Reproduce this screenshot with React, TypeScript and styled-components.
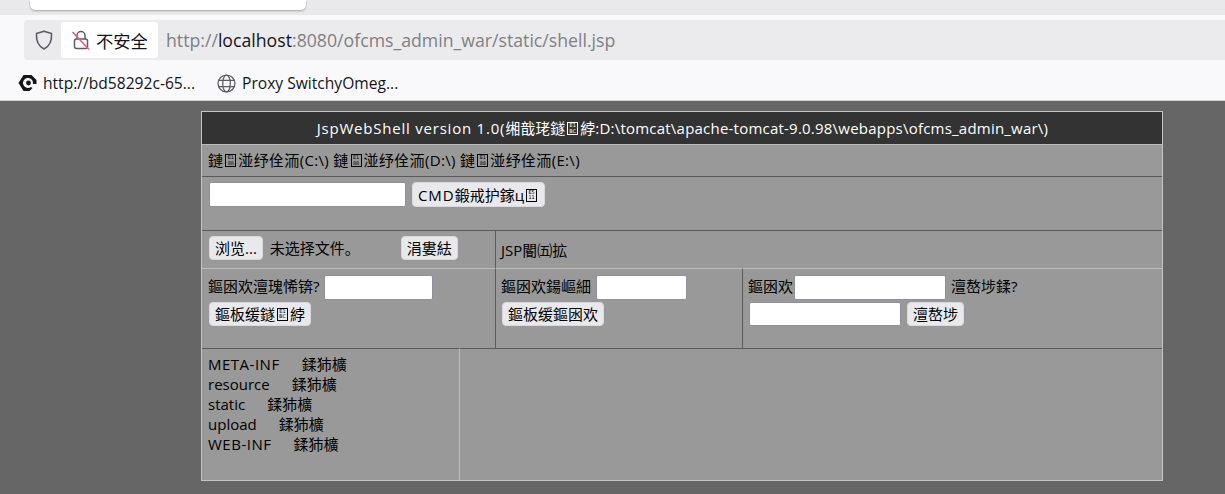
import React from "react";
import styled, { createGlobalStyle } from "styled-components";

const Global = createGlobalStyle`
  html, body { margin: 0; padding: 0; background: #666666; overflow: hidden; }
  body { font-family: "Noto Sans CJK SC", "Noto Sans", sans-serif; }
  #root { width: 1225px; height: 494px; overflow: hidden; }
`;

const TabStrip = styled.div`
  height: 15px;
  background: #e9e9eb;
  padding-left: 30px;
`;
const ActiveTab = styled.div`
  width: 276px;
  height: 10px;
  background: #fff;
  border-radius: 0 0 5px 5px;
  box-shadow: 0 1px 2px rgba(0, 0, 0, 0.3);
`;
const Toolbar = styled.div`
  height: 45px;
  background: #f9f9fb;
  padding: 5px 0 0 24px;
  box-sizing: border-box;
`;
const AddressBar = styled.div`
  height: 40px;
  background: #ebebed;
  border-radius: 4px 0 0 4px;
  display: flex;
  align-items: center;
  padding-left: 10px;
  gap: 7px;
`;
const SiteBadge = styled.div`
  height: 36px;
  width: 97px;
  background: #fff;
  border-radius: 3px;
  display: flex;
  align-items: center;
  padding-left: 10px;
  box-sizing: border-box;
  gap: 5px;
  font-size: 17.3px;
  color: #15141a;
`;
const Url = styled.div`
  font-family: "Open Sans", sans-serif;
  font-size: 17.7px;
  color: #7f7f84;
  margin-left: 1px;
  & b { font-weight: 400; color: #15141a; }
`;
const Bookmarks = styled.div`
  height: 34px;
  padding: 6px 0 0 18px;
  background: #f9f9fb;
  border-bottom: 1px solid #cfcfd8;
  display: flex;
  align-items: center;
  gap: 22px;
  font-family: "Open Sans", sans-serif;
  font-size: 15.6px;
  color: #15141a;
`;
const Bookmark = styled.div`
  display: flex;
  align-items: center;
  gap: 6px;
`;

const Page = styled.main`
  padding: 10px 0 0 201px;
`;
const Shell = styled.div`
  width: 962px;
  height: 370px;
  box-sizing: border-box;
  background: #999999;
  border: 1px solid #c4c4c4;
  display: grid;
  grid-template-columns: 257px 36px 247px 1fr;
  grid-template-rows: 32px 32px 54px 38px 80px 1fr;
  font-family: "Open Sans", "Noto Sans CJK SC", sans-serif;
  font-size: 15px;
  color: #000;
`;
const Cell = styled.div<{
  $span?: string;
  $dark?: boolean;
  $center?: boolean;
  $top?: "light" | "dark";
  $left?: "light" | "dark";
  $middle?: boolean;
  $track?: number;
}>`
  grid-column: ${(p) => p.$span ?? "auto"};
  box-sizing: border-box;
  min-width: 0;
  border-top: ${(p) =>
    p.$top ? `1px solid ${p.$top === "light" ? "#bdbdbd" : "#5a5a5a"}` : "0"};
  border-left: ${(p) =>
    p.$left ? `1px solid ${p.$left === "light" ? "#bdbdbd" : "#5a5a5a"}` : "0"};
  padding: ${(p) => (p.$dark ? 6 : 5)}px 5px 5px ${(p) => (p.$left ? 5 : 6)}px;
  background: ${(p) => (p.$dark ? "#333333" : "transparent")};
  color: ${(p) => (p.$dark ? "#ffffff" : "inherit")};
  text-align: ${(p) => (p.$center ? "center" : "left")};
  white-space: nowrap;
  line-height: 20px;
  letter-spacing: ${(p) => p.$track ?? 0}px;
  ${(p) => (p.$middle ? "display: flex; align-items: center;" : "")}
`;
const Tracked = styled.span<{ $track: number }>`
  letter-spacing: ${(p) => p.$track}px;
`;
const Field = styled.input<{ $w: number; $h?: number }>`
  width: ${(p) => p.$w}px;
  height: ${(p) => p.$h ?? 25}px;
  box-sizing: border-box;
  margin: 0 1px;
  border: 1px solid #8f8f9d;
  border-radius: 2px;
  background: #fff;
  padding: 0;
  vertical-align: middle;
`;
const Btn = styled.button<{ $h?: number }>`
  height: ${(p) => p.$h ?? 24}px;
  margin: 0 1px;
  padding: 0 5px;
  border: 1px solid #dadade;
  border-radius: 4px;
  background: #e9e9ed;
  font: inherit;
  color: #000;
  vertical-align: middle;
  line-height: 20px;
`;
const FileName = styled.span`
  margin: 0 7px 0 6px;
  vertical-align: middle;
`;
const UploadGap = styled.span`
  display: inline-block;
  width: 33px;
`;
const Row = styled.div`
  height: 26px;
  line-height: 24px;
`;
const FileLine = styled.div`
  line-height: 20px;
  display: flex;
  gap: 22px;
`;
const FileTitle = styled.span<{ $caps: boolean }>`
  letter-spacing: ${(p) => (p.$caps ? 0.5 : 0)}px;
`;
const TofuBox = styled.span`
  display: inline-block;
  width: 11px;
  height: 13px;
  box-sizing: border-box;
  margin: 0 2px;
  overflow: hidden;
  border: 1px solid currentColor;
  font-family: "DejaVu Sans", sans-serif;
  font-size: 5px;
  line-height: 5.5px;
  letter-spacing: 0;
  text-align: center;
  vertical-align: -1px;
`;
const TofuLine = styled.span`
  display: block;
`;

const Tofu = ({ hex }: { hex: [string, string] }) => (
  <TofuBox>
    <TofuLine>{hex[0]}</TofuLine>
    <TofuLine>{hex[1]}</TofuLine>
  </TofuBox>
);

const Shield = () => (
  <svg width="20" height="22" viewBox="0 0 20 22" fill="none" stroke="#5b5b66" strokeWidth="1.6">
    <path d="M10 2.2 L17.5 4.6 C18 12 15.5 17.2 10 20 C4.5 17.2 2 12 2.5 4.6 Z" strokeLinejoin="round" />
  </svg>
);
const BrokenLock = () => (
  <svg width="20" height="22" viewBox="0 0 20 22" fill="none">
    <path d="M6 10 V6.5 a4 4 0 0 1 8 0 V10" stroke="#5b5b66" strokeWidth="1.5" />
    <rect x="3.5" y="10" width="13" height="9.5" rx="2" stroke="#5b5b66" strokeWidth="1.5" />
    <path d="M1.5 3 L18 20.5" stroke="#f0597f" strokeWidth="1.6" />
  </svg>
);
const Logo = () => (
  <svg width="19" height="18" viewBox="0 0 19 18">
    <path d="M5.5 1 H13.5 L18.5 6 V10 H15 V9 A5 5 0 1 0 13 13 L14.5 14 L11.5 17 H5.5 L0.5 9 Z" fill="#15141a" />
    <circle cx="10.5" cy="9" r="2.4" fill="#15141a" />
  </svg>
);
const Globe = () => (
  <svg width="19" height="19" viewBox="0 0 18 18" fill="none" stroke="#5b5b66" strokeWidth="1.2">
    <circle cx="9" cy="9" r="8" />
    <ellipse cx="9" cy="9" rx="3.6" ry="8" />
    <path d="M1.6 6 H16.4 M1.6 12 H16.4" />
  </svg>
);

const files = ["META-INF", "resource", "static", "upload", "WEB-INF"];

export default function App() {
  return (
    <>
      <Global />
      <TabStrip>
        <ActiveTab />
      </TabStrip>
      <Toolbar>
        <AddressBar>
          <Shield />
          <SiteBadge>
            <BrokenLock />
            不安全
          </SiteBadge>
          <Url>
            http://<b>localhost</b>:8080/ofcms_admin_war/static/shell.jsp
          </Url>
        </AddressBar>
      </Toolbar>
      <Bookmarks>
        <Bookmark>
          <Logo />
          http://bd58292c-65...
        </Bookmark>
        <Bookmark>
          <Globe />
          Proxy SwitchyOmeg...
        </Bookmark>
      </Bookmarks>
      <Page>
        <Shell>
          <Cell $span="1 / -1" $dark $center>
            <Tracked $track={0.78}>JspWebShell version 1.0(</Tracked>
            缃戠珯鐩<Tofu hex={["E1", "BC"]} />綍
            <Tracked $track={0.22}>:D:\tomcat\apache-tomcat-9.0.98\webapps\ofcms_admin_war\)</Tracked>
          </Cell>
          <Cell $span="1 / -1" $top="light" $track={0.33}>
            鏈<Tofu hex={["E1", "88"]} />湴纾佺洏(C:\) 鏈<Tofu hex={["E1", "88"]} />湴纾佺洏(D:\) 鏈<Tofu hex={["E1", "88"]} />湴纾佺洏(E:\)
          </Cell>
          <Cell $span="1 / -1" $top="dark">
            <Field $w={197} /> <Btn $h={25}><Tracked $track={1}>CMD</Tracked>鍛戒护鎵ц<Tofu hex={["E5", "11"]} /></Btn>
          </Cell>
          <Cell $span="1 / 3" $top="dark">
            <Btn>浏览...</Btn>
            <FileName>未选择文件。</FileName>
            <UploadGap />
            <Btn>涓婁紶</Btn>
          </Cell>
          <Cell $span="3 / -1" $top="dark" $left="dark" $middle>
            JSP閽㈤拡
          </Cell>
          <Cell $span="1 / 3" $top="light">
            <Row>
              鏂囦欢澶瑰悕锛? <Field $w={109} />
            </Row>
            <Row>
              <Btn>鏂板缓鐩<Tofu hex={["E1", "BC"]} />綍</Btn>
            </Row>
          </Cell>
          <Cell $top="light" $left="dark">
            <Row>
              鏂囦欢鍚嶇細 <Field $w={91} />
            </Row>
            <Row>
              <Btn>鏂板缓鏂囦欢</Btn>
            </Row>
          </Cell>
          <Cell $top="light" $left="dark">
            <Row>
              鏂囦欢<Field $w={152} /> 澶嶅埗鍒?
            </Row>
            <Row>
              <Field $w={152} $h={24} /> <Btn>澶嶅埗</Btn>
            </Row>
          </Cell>
          <Cell $top="dark">
            {files.map((f) => (
              <FileLine key={f}>
                <FileTitle $caps={f === f.toUpperCase()}>{f}</FileTitle>
                <span>鍒犻櫎</span>
              </FileLine>
            ))}
          </Cell>
          <Cell $span="2 / -1" $top="dark" $left="light" />
        </Shell>
      </Page>
    </>
  );
}
